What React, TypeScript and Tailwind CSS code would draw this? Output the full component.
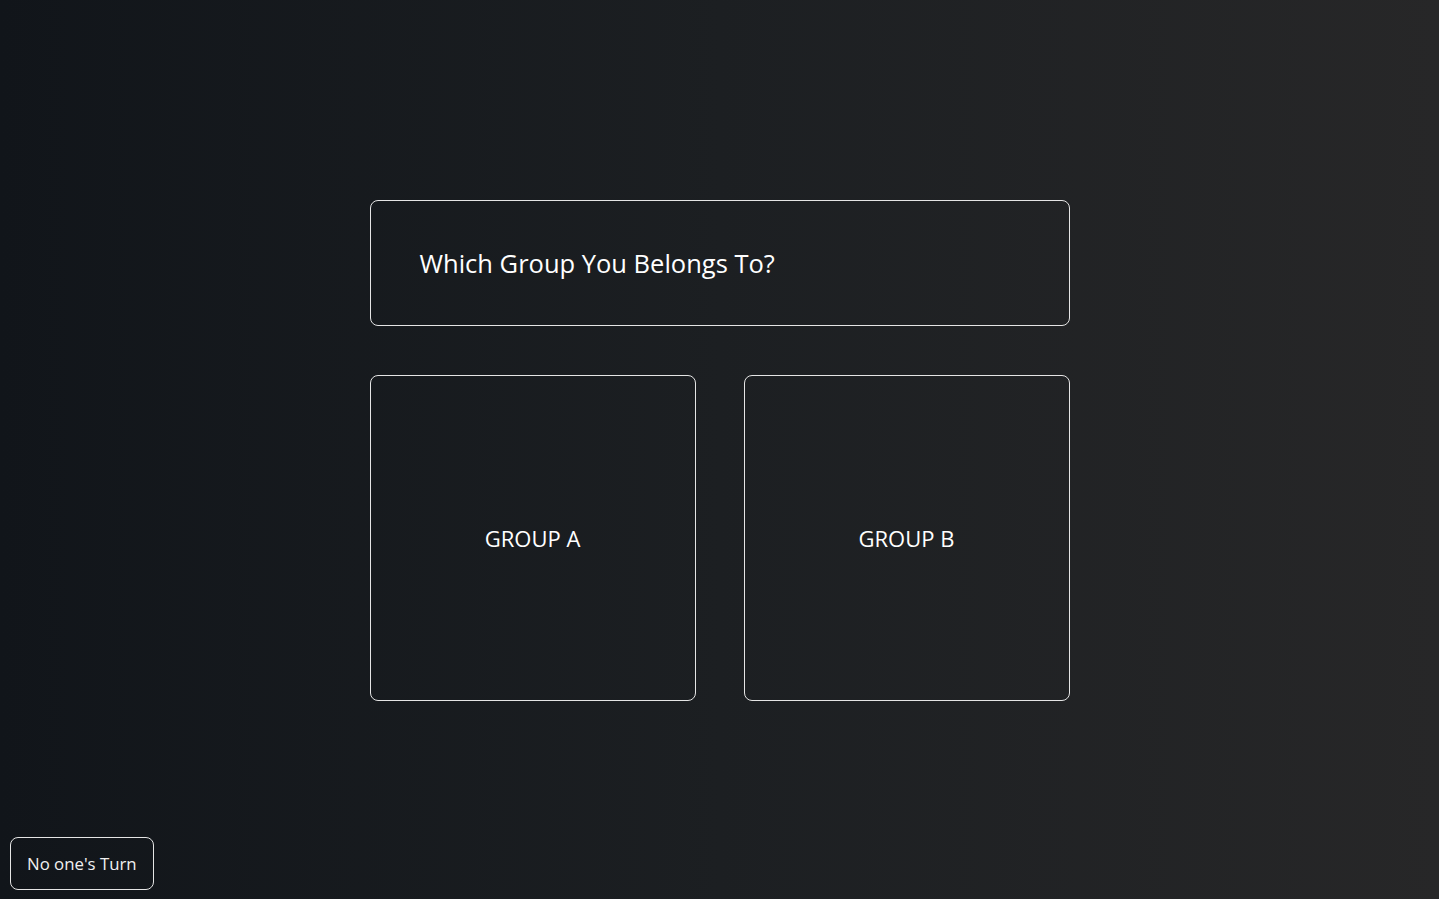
export default function App() {
  return (
    <div
      className="relative flex h-[899px] w-full items-center justify-center overflow-hidden bg-[linear-gradient(to_right,#11151a_0%,#1c1f22_50%,#272728_100%)] text-white"
      style={{ fontFamily: '"Open Sans", "Noto Sans", sans-serif' }}
    >
      <div className="mt-[2px] flex w-[700px] flex-col gap-[49px]">
        <div className="flex h-[126px] items-center rounded-lg border border-[#e5e5e5] px-[49px]">
          <h1 className="text-[25.5px] font-normal">Which Group You Belongs To?</h1>
        </div>
        <div className="grid grid-cols-2 gap-[48px]">
          <button className="flex h-[326px] items-center justify-center rounded-lg border border-[#e5e5e5] text-[22px]">
            GROUP A
          </button>
          <button className="flex h-[326px] items-center justify-center rounded-lg border border-[#e5e5e5] text-[22px]">
            GROUP B
          </button>
        </div>
      </div>

      <div className="absolute bottom-[9px] left-[10px] rounded-lg border border-[#e5e5e5] px-4 py-[13px] text-[16.8px] font-medium leading-[25px] text-[#f0f0f0]">
        No one's Turn
      </div>
    </div>
  );
}
